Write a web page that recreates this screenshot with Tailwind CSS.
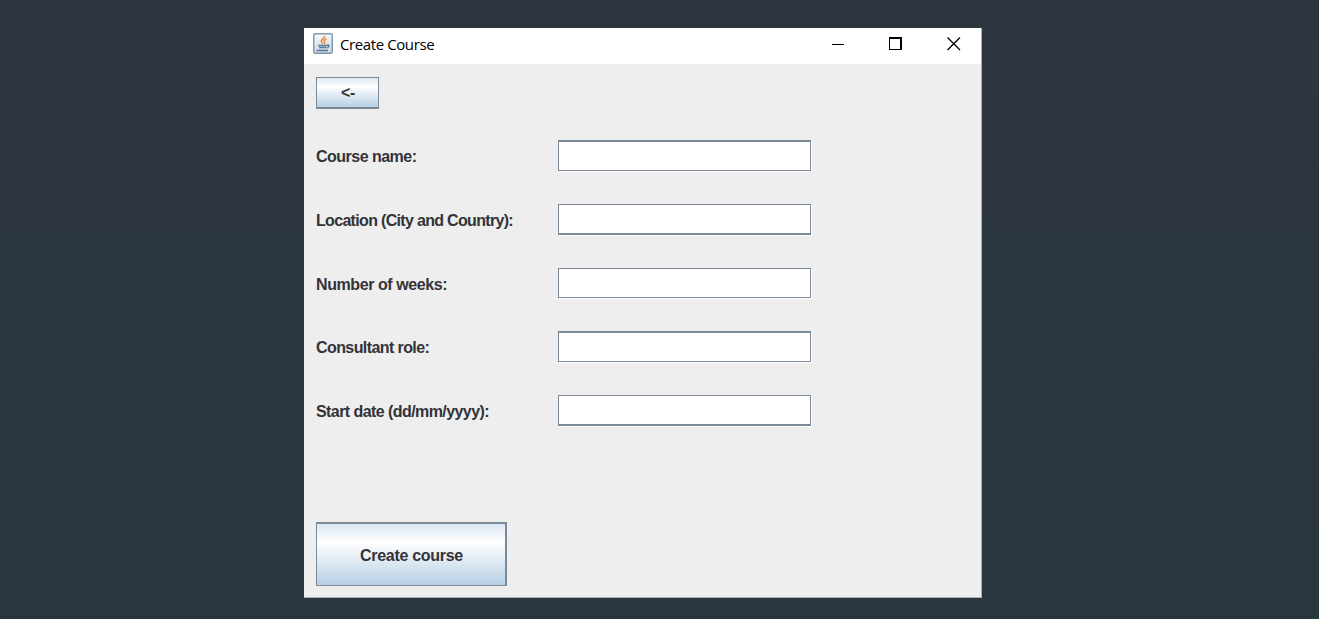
<!DOCTYPE html>
<html lang="en">
<head>
<meta charset="utf-8">
<title>Create Course</title>
<script src="https://cdn.jsdelivr.net/npm/@tailwindcss/browser@4"></script>
</head>
<body class="h-screen overflow-hidden bg-linear-to-b from-[#2e353f] via-[#2b363e] to-[#28363d] pl-[304px] pt-7 font-['Liberation_Sans',Arial,sans-serif] text-[#333338]">
<main class="flex h-[570px] w-[678px] flex-col border-r border-b border-[#a9afb3] bg-[#eeeeee]">
  <header class="flex h-9 shrink-0 items-start bg-white pl-[9px] text-black">
    <svg class="mt-[5px] h-[22px] w-5 shrink-0" viewBox="0 0 20 22" fill="none">
      <defs><linearGradient id="g" x1="0" y1="0" x2="0" y2="1"><stop stop-color="#f6f8fa"/><stop offset="1" stop-color="#c9d8e6"/></linearGradient></defs>
      <rect x=".75" y=".75" width="18.5" height="19.5" rx="1.5" fill="url(#g)" stroke="#8299ad" stroke-width="1.5"/>
      <path d="M11.500 3c.8 2.400-4.400 3.400-3 5.800.5.9 1.300 1.300 1 2.400M13.500 6c-2.500 1-3 1.900-1.900 3.100.5.700.2 1.300-.5 1.900" stroke="#e58a45" stroke-width="1.500"/>
      <path d="M5 12.500h8.800M6 14.500h7M13.800 12.300c2.800-.8 2.900 1.600-.2 2.500M3.500 17.500h11.500" stroke="#587a9c" stroke-width="1.500"/>
    </svg>
    <span class="ml-[7px] mt-[5px] whitespace-nowrap font-['Open_Sans','Noto_Sans',sans-serif] text-[15px] leading-[23px] tracking-[-0.4px]">Create Course</span>
    <div class="ml-auto mr-5 mt-2 flex">
      <svg class="h-4 w-[130px]" viewBox="0 0 130 16" shape-rendering="crispEdges">
        <path d="M1 8h12v1H1z"/>
        <path d="M58 1h13v13H58zM59 3v10h10V3z" fill-rule="evenodd"/>
        <path d="m116.500 1.500 12.500 12.500M129 1.500l-12.500 12.500" stroke="#000" stroke-width="1.300" shape-rendering="auto"/>
      </svg>
    </div>
  </header>
  <section class="flex grow flex-col items-start pl-3 pt-[13px] text-[16px] font-bold">
    <button class="h-8 w-[63px] border border-b-2 border-[#7a8a99] bg-linear-to-b from-[#dde8f3] via-white via-30% to-[#b8cfe5] pt-px pl-px font-bold tracking-[-0.3px]">&lt;-</button>
    <div class="mt-[31px] grid grid-cols-[242px_253px] grid-rows-[64px_64px_63px_64px_35px] whitespace-nowrap">
      <label for="a" class="pt-[5px] leading-6 tracking-[-0.52px]">Course name:</label>
      <input id="a" class="h-[31px] w-[253px] border border-t-2 border-[#7a8a99] bg-white shadow-[1px_1px_#fff]">
      <label for="b" class="pt-[5px] leading-6 tracking-[-0.68px]">Location (City and Country):</label>
      <input id="b" class="h-[31px] w-[253px] border border-b-2 border-[#7a8a99] bg-white shadow-[1px_1px_#fff]">
      <label for="c" class="pt-[5px] leading-6 tracking-[-0.42px]">Number of weeks:</label>
      <input id="c" class="h-[30px] w-[253px] border border-[#7a8a99] bg-white shadow-[1px_1px_#fff]">
      <label for="d" class="pt-[5px] leading-6 tracking-[-0.59px]">Consultant role:</label>
      <input id="d" class="h-[31px] w-[253px] border border-t-2 border-[#7a8a99] bg-white shadow-[1px_1px_#fff]">
      <label for="e" class="pt-[5px] leading-6 tracking-[-0.57px]">Start date (dd/mm/yyyy):</label>
      <input id="e" class="h-[31px] w-[253px] border border-b-2 border-[#7a8a99] bg-white shadow-[1px_1px_#fff]">
    </div>
    <button class="mt-auto mb-[11px] h-16 w-[191px] border border-t-2 border-r-2 border-[#7a8a99] bg-linear-to-b from-[#dde8f3] via-white via-30% to-[#b8cfe5] pl-px pt-0.5 font-bold tracking-[-0.3px]">Create course</button>
  </section>
</main>
</body>
</html>
